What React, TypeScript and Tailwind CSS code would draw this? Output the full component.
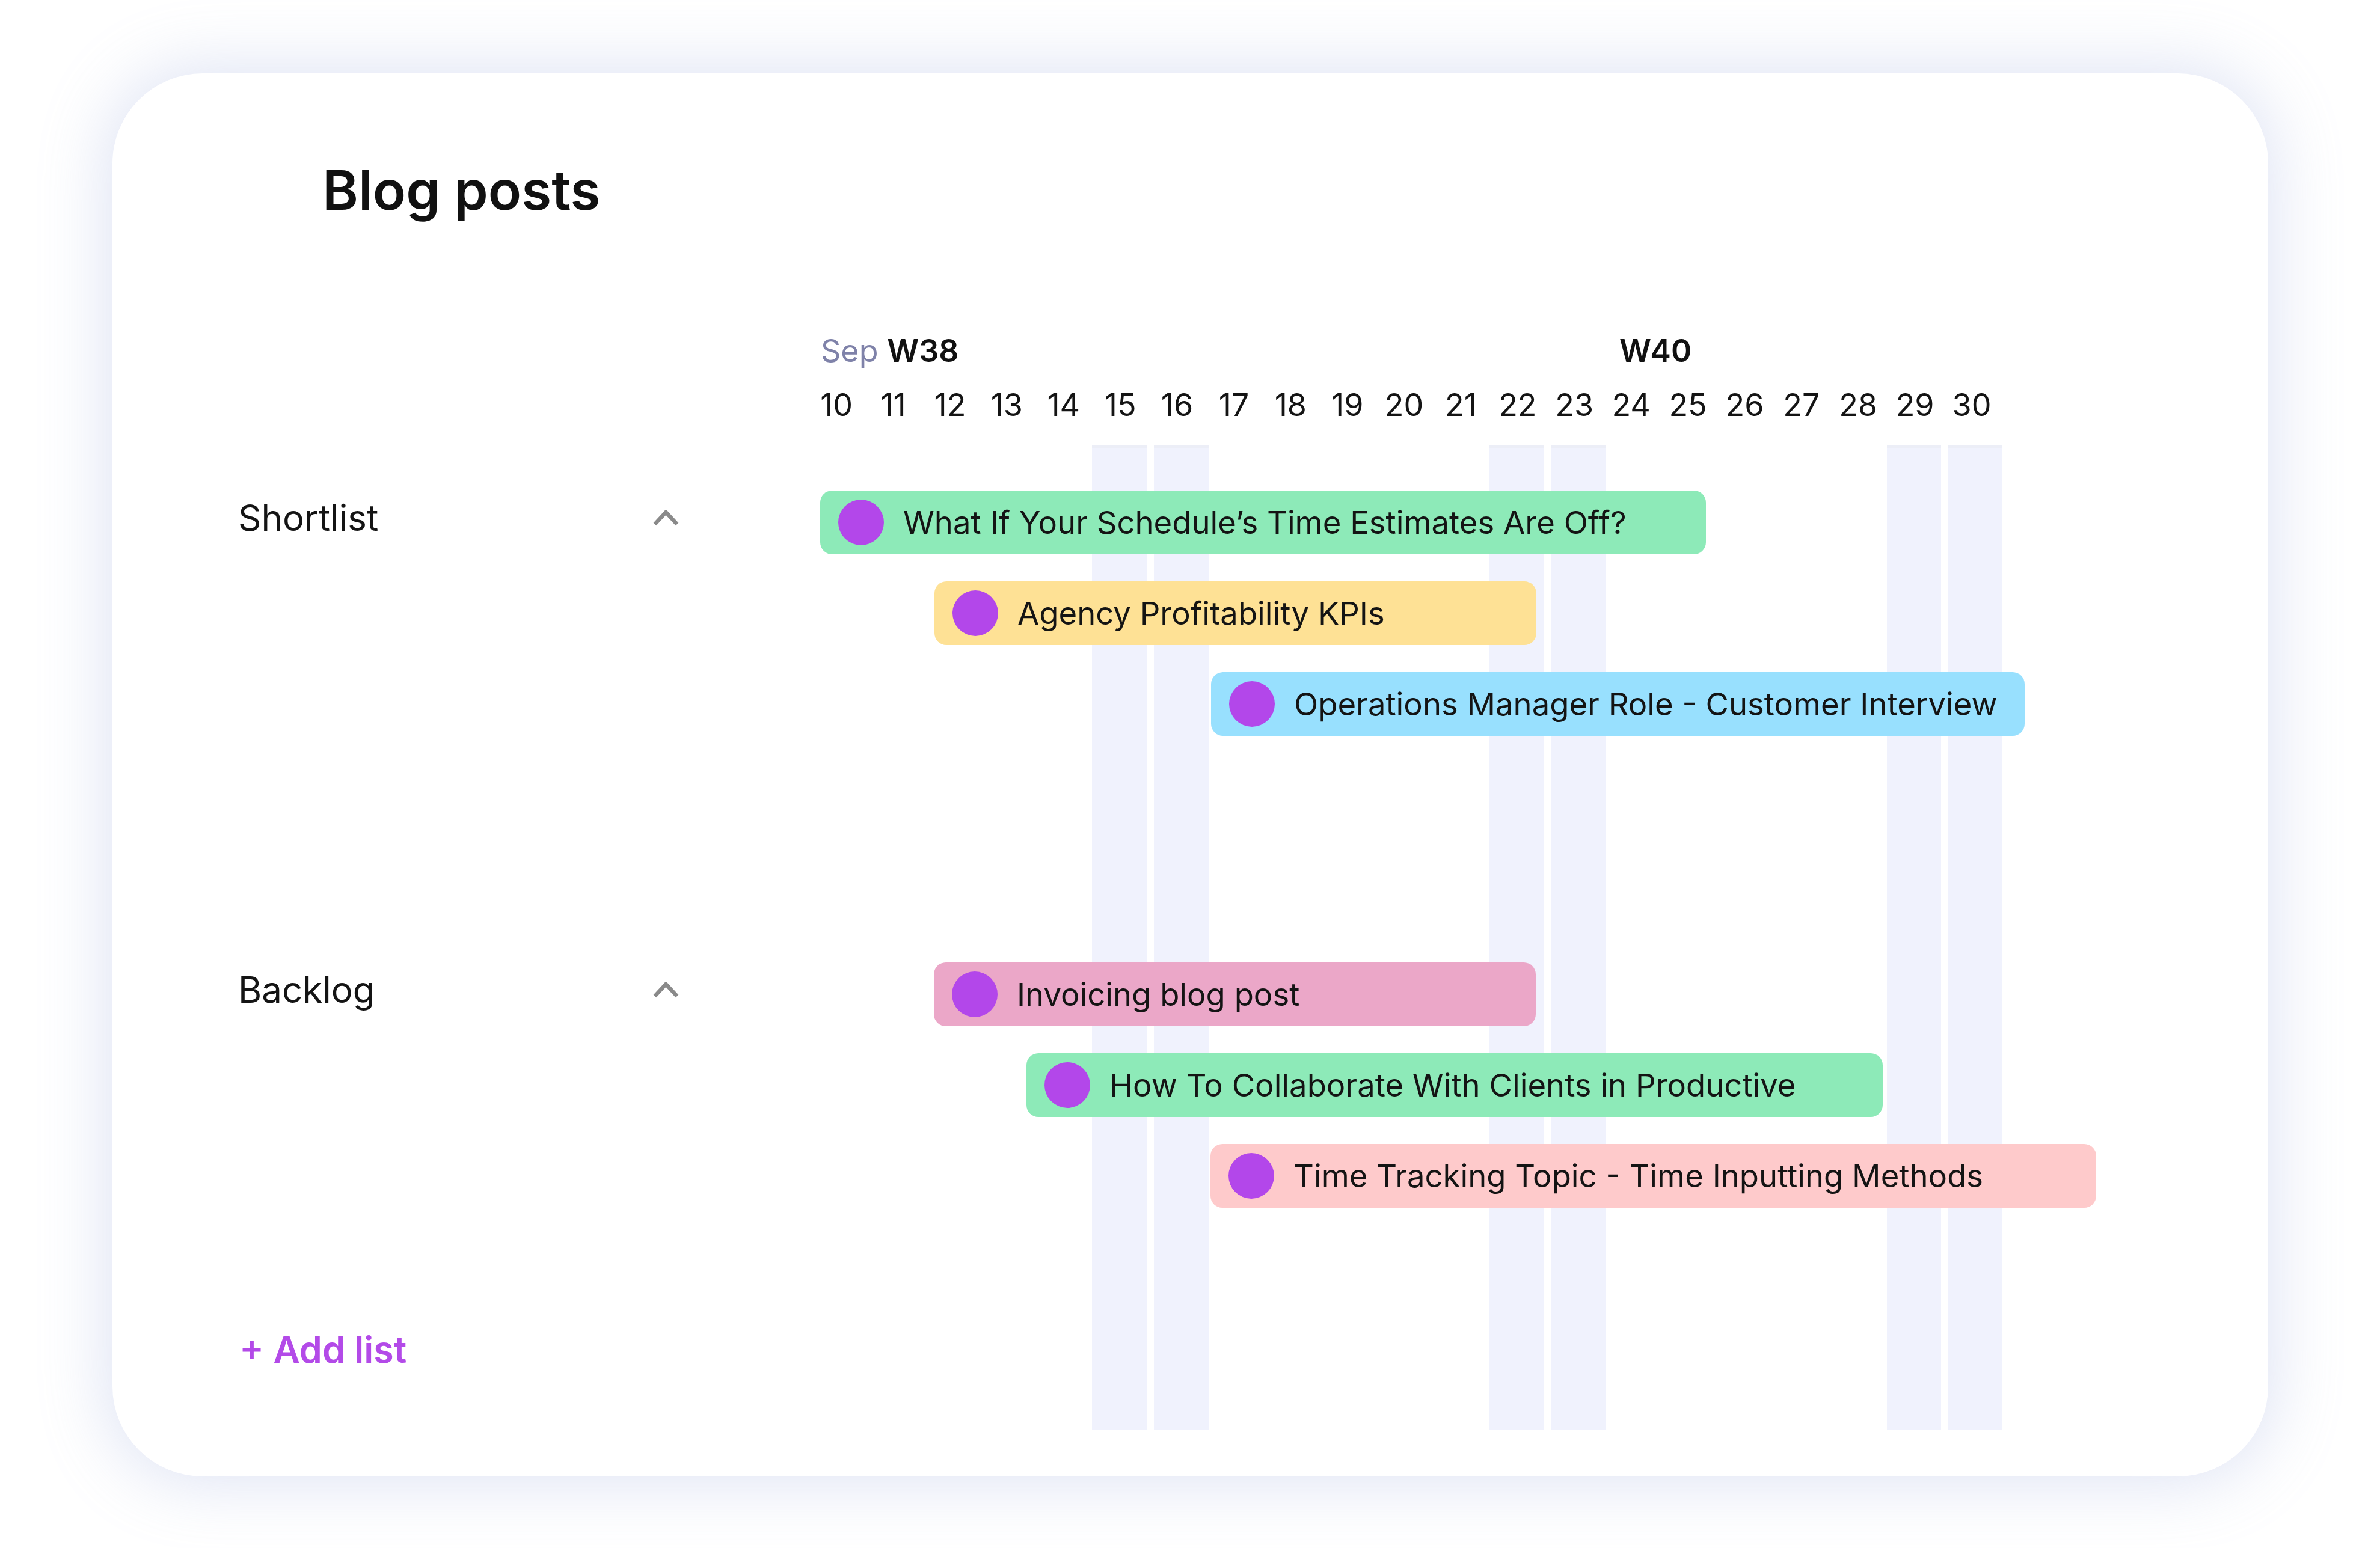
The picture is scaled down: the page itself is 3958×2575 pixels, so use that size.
import React from "react";

type Bar = { cls: string; text: string };

const shortlist: Bar[] = [
  { cls: "ml-[20px] w-[1473px] bg-[#8deab8]", text: "What If Your Schedule’s Time Estimates Are Off?" },
  { cls: "ml-[210px] w-[1001px] bg-[#fee195]", text: "Agency Profitability KPIs" },
  { cls: "ml-[670px] w-[1353px] bg-[#98e0fe]", text: "Operations Manager Role - Customer Interview" },
];

const backlog: Bar[] = [
  { cls: "ml-[209px] w-[1001px] bg-[#eba7c8]", text: "Invoicing blog post" },
  { cls: "ml-[363px] w-[1424px] bg-[#8deab8]", text: "How To Collaborate With Clients in Productive" },
  { cls: "ml-[669px] w-[1473px] bg-[#fecacb]", text: "Time Tracking Topic - Time Inputting Methods" },
];

const days = Array.from({ length: 21 }, (_, i) => 10 + i);

const stripes = [
  "left-[1629px] w-[92px]",
  "left-[1732px] w-[91px]",
  "left-[2290px] w-[91px]",
  "left-[2392px] w-[91px]",
  "left-[2951px] w-[90px]",
  "left-[3052px] w-[91px]",
];

function Chevron() {
  return (
    <svg width="43" height="27" viewBox="0 0 43 27" fill="none">
      <polyline points="3,24 21.5,4 40,24" stroke="#8a8a8a" strokeWidth="6.5" strokeLinejoin="miter" />
    </svg>
  );
}

function TaskBar({ bar }: { bar: Bar }) {
  return (
    <div className={`flex h-[106px] shrink-0 items-center rounded-[20px] ${bar.cls}`}>
      <div className="ml-[30px] h-[76px] w-[76px] shrink-0 rounded-full bg-[#b347ea]" />
      <span className="ml-[32px] whitespace-nowrap text-[52.6px] leading-none text-[#141414]">{bar.text}</span>
    </div>
  );
}

function Section({ label, bars, className }: { label: string; bars: Bar[]; className: string }) {
  return (
    <div className={`relative flex ${className}`}>
      <div className="w-[1157px] shrink-0 pl-[209px] pt-[15px]">
        <div className="flex h-[60px] w-[733px] items-center justify-between">
          <span className="text-[60px] leading-[60px] text-[#141414]">{label}</span>
          <Chevron />
        </div>
      </div>
      <div className="flex w-[1982px] flex-col gap-[45px]">
        {bars.map((b) => (
          <TaskBar key={b.text} bar={b} />
        ))}
      </div>
    </div>
  );
}

export default function App() {
  return (
    <div className="h-[2575px] w-[3958px] overflow-hidden bg-white pl-[187px] pt-[122px] font-['Inter','Noto_Sans',sans-serif] text-[#141414]">
      <div className="relative h-[2334px] w-[3585px] rounded-[150px] bg-white shadow-[0_0_110px_12px_rgba(150,165,220,0.30)]">
        <h1 className="pl-[349px] pt-[149px] text-[91px] font-semibold leading-[91px] text-[#111111]">Blog posts</h1>

        <div className="relative mt-[196px]">
          {stripes.map((s) => (
            <div
              key={s}
              className={`absolute top-[183px] h-[1637px] border-t-[4px] border-[#eceef7] bg-[#f0f2fd] ${s}`}
            />
          ))}

          <div className="relative flex">
            <div className="w-[1157px] shrink-0" />
            <div className="w-[1982px]">
              <div className="flex h-[52px] text-[52px] leading-[52px]">
                <div className="w-[1349px] shrink-0 pl-[21px] whitespace-nowrap">
                  <span className="text-[#7f82a9]">Sep</span>{" "}
                  <span className="font-semibold text-[#111111]">W38</span>
                </div>
                <span className="font-semibold text-[#111111]">W40</span>
              </div>
              <div className="mt-[38px] grid grid-cols-[repeat(21,94.4px)] text-[52px] leading-[52px] text-[#141414]">
                {days.map((d) => (
                  <span key={d} className="text-center">
                    {d}
                  </span>
                ))}
              </div>
            </div>
          </div>

          <Section label="Shortlist" bars={shortlist} className="mt-[116px]" />
          <Section label="Backlog" bars={backlog} className="mt-[377px]" />

          <div className="relative mt-[206px] pl-[211px] text-[61px] font-semibold leading-[60px] text-[#b34ae8]">
            + Add list
          </div>
        </div>
      </div>
    </div>
  );
}
